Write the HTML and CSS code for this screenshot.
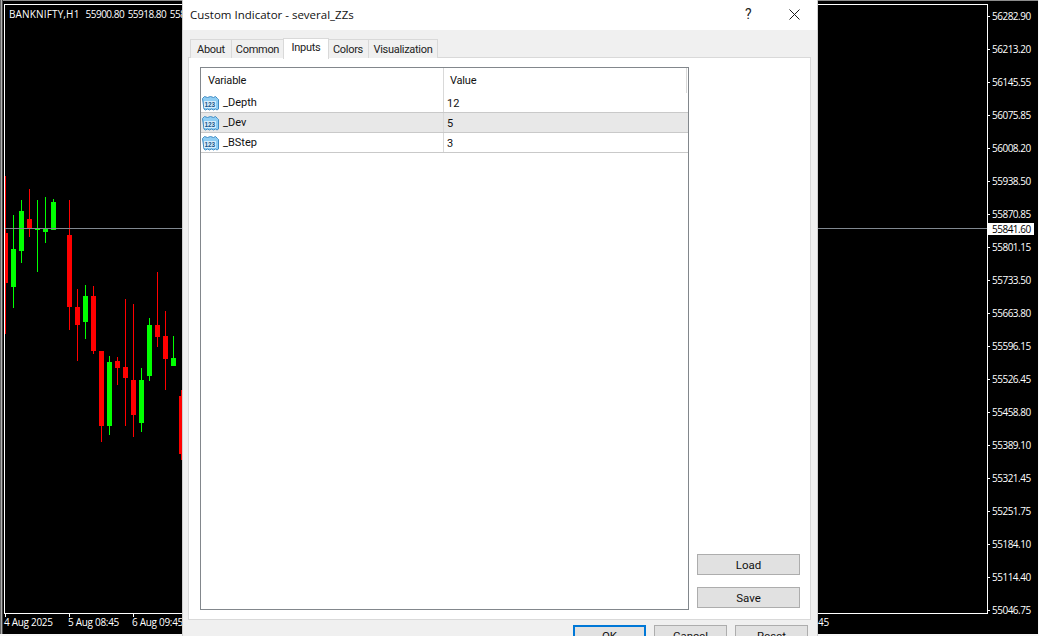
FILE: index.html
```html
<!DOCTYPE html>
<html lang="en">
<head>
<meta charset="utf-8">
<title>Custom Indicator - several_ZZs</title>
<link rel="stylesheet" href="styles.css">
</head>
<body>
<div class="terminal">
  <div class="chart-frame">
    <svg class="candles" width="178" height="600" viewBox="0 0 178 600" aria-hidden="true">
      <g transform="translate(-5,-5)">
        <g fill="#ff0000">
          <rect x="5" y="176" width="1" height="158"/><rect x="5" y="233" width="3" height="50"/>
          <rect x="29" y="189" width="1" height="48"/><rect x="27" y="219" width="5" height="9"/>
          <rect x="69" y="200" width="1" height="130"/><rect x="67" y="235" width="5" height="72"/>
          <rect x="77" y="289" width="1" height="72"/><rect x="75" y="307" width="5" height="18"/>
          <rect x="93" y="286" width="1" height="68"/><rect x="91" y="296" width="5" height="55"/>
          <rect x="101" y="351" width="1" height="91"/><rect x="99" y="351" width="5" height="75"/>
          <rect x="117" y="357" width="1" height="28"/><rect x="115" y="361" width="5" height="7"/>
          <rect x="125" y="299" width="1" height="127"/><rect x="123" y="367" width="5" height="11"/>
          <rect x="133" y="304" width="1" height="133"/><rect x="131" y="380" width="5" height="35"/>
          <rect x="157" y="272" width="1" height="75"/><rect x="155" y="325" width="5" height="12"/>
          <rect x="165" y="311" width="1" height="79"/><rect x="163" y="336" width="5" height="23"/>
          <rect x="181" y="390" width="1" height="70"/><rect x="179" y="396" width="5" height="58"/>
        </g>
        <g fill="#00ff00">
          <rect x="13" y="215" width="1" height="93"/><rect x="11" y="249" width="5" height="38"/>
          <rect x="21" y="200" width="1" height="63"/><rect x="19" y="211" width="5" height="40"/>
          <rect x="37" y="200" width="1" height="72"/><rect x="35" y="228" width="5" height="2"/>
          <rect x="45" y="197" width="1" height="46"/><rect x="43" y="229" width="5" height="3"/>
          <rect x="53" y="199" width="1" height="31"/><rect x="51" y="202" width="5" height="28"/>
          <rect x="85" y="285" width="1" height="54"/><rect x="83" y="296" width="5" height="26"/>
          <rect x="109" y="356" width="1" height="79"/><rect x="107" y="362" width="5" height="64"/>
          <rect x="141" y="368" width="1" height="64"/><rect x="139" y="380" width="5" height="43"/>
          <rect x="149" y="318" width="1" height="63"/><rect x="147" y="325" width="5" height="51"/>
          <rect x="173" y="336" width="1" height="22"/><rect x="171" y="358" width="5" height="8"/>
        </g>
      </g>
    </svg>
    <div class="bid-line"></div>
    <div class="symbol-info"><span class="sym">BANKNIFTY,H1</span><span class="quote">55900.80</span><span class="quote">55918.80</span><span class="quote">558</span></div>
  </div>
  <div class="price-axis">
    <div class="price">56282.90</div><div class="price">56213.20</div><div class="price">56145.55</div>
    <div class="price">56075.85</div><div class="price">56008.20</div><div class="price">55938.50</div>
    <div class="price">55870.85</div><div class="price">55801.15</div><div class="price">55733.50</div>
    <div class="price">55663.80</div><div class="price">55596.15</div><div class="price">55526.45</div>
    <div class="price">55458.80</div><div class="price">55389.10</div><div class="price">55321.45</div>
    <div class="price">55251.75</div><div class="price">55184.10</div><div class="price">55114.40</div>
    <div class="price">55046.75</div>
    <div class="bid-tag">55841.60</div>
  </div>
  <div class="time-axis">
    <span class="time">4 Aug 2025</span><span class="time">5 Aug 08:45</span><span class="time">6 Aug 09:45</span>
    <span class="time time-end">45</span>
  </div>
</div>

<section class="dialog">
  <header class="titlebar">
    <span class="title">Custom Indicator - several_ZZs</span>
    <span class="help">?</span>
    <svg class="close" width="11" height="11" viewBox="0 0 11 11" aria-hidden="true"><path d="M.5.5l10 10M10.500.5l-10 10" stroke="#1a1a1a" fill="none"/></svg>
  </header>
  <div class="tabs">
    <span class="tab tab-about">About</span>
    <span class="tab tab-common">Common</span>
    <span class="tab tab-active">Inputs</span>
    <span class="tab tab-colors">Colors</span>
    <span class="tab tab-vis">Visualization</span>
  </div>
  <div class="pane">
    <div class="list">
      <div class="list-head">
        <div class="head-var">Variable</div>
        <div class="head-val">Value</div>
      </div>
      <div class="row">
        <div class="cell-var"><svg class="ico" width="17" height="16" viewBox="0 0 17 16" aria-hidden="true"><path d="M.5 3.500l2-2 3 1 3-1 3 1 2-1 2 2 1 1v9.500l-1.500 1-1.500-1-2 1-2-1-2 1-2-1-2 1-1.500-1z" class="ico-sheet"/><rect x="2" y="6" width="12" height="7" class="ico-band"/><text x="2.400" y="12" class="ico-text">123</text></svg><span>_Depth</span></div>
        <div class="cell-val">12</div>
      </div>
      <div class="row row-selected">
        <div class="cell-var"><svg class="ico" width="17" height="16" viewBox="0 0 17 16" aria-hidden="true"><path d="M.5 3.500l2-2 3 1 3-1 3 1 2-1 2 2 1 1v9.500l-1.500 1-1.500-1-2 1-2-1-2 1-2-1-2 1-1.500-1z" class="ico-sheet"/><rect x="2" y="6" width="12" height="7" class="ico-band"/><text x="2.400" y="12" class="ico-text">123</text></svg><span>_Dev</span></div>
        <div class="cell-val">5</div>
      </div>
      <div class="row">
        <div class="cell-var"><svg class="ico" width="17" height="16" viewBox="0 0 17 16" aria-hidden="true"><path d="M.5 3.500l2-2 3 1 3-1 3 1 2-1 2 2 1 1v9.500l-1.500 1-1.500-1-2 1-2-1-2 1-2-1-2 1-1.500-1z" class="ico-sheet"/><rect x="2" y="6" width="12" height="7" class="ico-band"/><text x="2.400" y="12" class="ico-text">123</text></svg><span>_BStep</span></div>
        <div class="cell-val">3</div>
      </div>
    </div>
    <div class="side">
      <button class="btn side-btn">Load</button>
      <button class="btn side-btn">Save</button>
    </div>
  </div>
  <footer class="actions">
    <button class="btn act act-default">OK</button>
    <button class="btn act">Cancel</button>
    <button class="btn act">Reset</button>
  </footer>
</section>
</body>
</html>
```
FILE: styles.css
```css
* { box-sizing: border-box; }
html, body { margin: 0; height: 100%; overflow: hidden; }
body {
  width: 1039px;
  height: 636px;
  position: relative;
  background: #f8f8f8;
  font-family: Roboto, "Liberation Sans", Arial, sans-serif;
  font-size: 12px;
  color: #111;
}
.terminal {
  width: 1038px;
  height: 634px;
  background: #000;
  position: relative;
  display: grid;
  grid-template-columns: 984px 1fr;
  grid-template-rows: 610px 1fr;
  padding: 4px 0 0 4px;
  box-shadow: inset 1px 0 0 #666, inset 2px 0 0 #b0b0b0, inset 3px 0 0 #444, inset 0 1px 0 #8c8c8c;
  font-family: "Open Sans", "Liberation Sans", sans-serif;
  font-size: 10px;
  color: #fff;
}
.chart-frame {
  position: relative;
  border: 1px solid #fff;
  overflow: hidden;
}
.candles { display: block; }
.bid-line {
  position: absolute;
  left: 0;
  right: 0;
  top: 223px;
  height: 1px;
  background: #808890;
}
.symbol-info {
  position: absolute;
  top: 2px;
  left: 4px;
  display: flex;
  line-height: 14px;
  white-space: nowrap;
}
.sym { letter-spacing: 0.15px; margin-right: 6px; }
.quote { letter-spacing: -0.5px; margin-right: 3.500px; }
.price-axis {
  position: relative;
  padding-top: 5px;
}
.price {
  height: 33px;
  line-height: 14px;
  padding-left: 4px;
  letter-spacing: -0.5px;
  position: relative;
}
.price::before {
  content: "";
  position: absolute;
  left: 0;
  top: 7px;
  width: 2px;
  height: 1px;
  background: #fff;
}
.bid-tag {
  position: absolute;
  left: 0;
  top: 219px;
  width: 46px;
  height: 12px;
  line-height: 12px;
  padding-left: 4px;
  letter-spacing: -0.5px;
  background: #fff;
  color: #000;
}
.time-axis {
  grid-column: 1 / 3;
  display: flex;
  line-height: 14px;
  padding-top: 1px;
}
.time {
  width: 64px;
  white-space: nowrap;
  letter-spacing: -0.3px;
  position: relative;
}
.time::before {
  content: "";
  position: absolute;
  left: 1px;
  top: -1px;
  width: 1px;
  height: 3px;
  background: #fff;
}
.time-end { margin-left: 622px; }
.time-end::before { display: none; }
.dialog {
  position: absolute;
  left: 182px;
  top: 0;
  width: 636px;
  height: 636px;
  background: #f0f0f0;
  border-left: 1px solid #d0d0d0;
  border-right: 1px solid #d0d0d0;
  overflow: hidden;
}
.titlebar {
  height: 30px;
  background: #fff;
  display: flex;
  align-items: center;
  padding: 0 17px 2px 7px;
}
.title {
  font-family: "Open Sans", "Liberation Sans", sans-serif;
  font-size: 11.500px;
  flex: 1;
  color: #111;
}
.help { font-size: 14px; width: 44px; color: #222; }
.close { display: block; }
.tabs {
  display: flex;
  align-items: flex-end;
  height: 28px;
  padding-left: 7px;
  font-size: 11px;
  letter-spacing: -0.3px;
  position: relative;
  z-index: 1;
}
.tab {
  height: 19px;
  line-height: 19px;
  text-align: center;
  background: #f0f0f0;
  border: 1px solid #d9d9d9;
  border-bottom: 0;
  border-left: 0;
  color: #222;
}
.tab-about { width: 42px; border-left: 1px solid #d9d9d9; }
.tab-common { width: 52px; }
.tab-active {
  width: 46px;
  height: 21px;
  line-height: 18px;
  background: #fff;
  border: 1px solid #d9d9d9;
  border-bottom: 0;
  margin-bottom: -1px;
  margin-left: -1px;
  position: relative;
}
.tab-colors { width: 41px; margin-left: -1px; }
.tab-vis { width: 69px; }
.pane {
  margin: -1px 6px 0 5px;
  height: 563px;
  background: #fff;
  border: 1px solid #d9d9d9;
  display: flex;
  padding: 9px 10px 8px 11px;
}
.list {
  width: 489px;
  height: 543px;
  border: 1px solid #82878c;
  background: #fff;
  font-size: 11px;
  flex: none;
}
.list-head { display: flex; height: 25px; line-height: 26px; }
.head-var { width: 243px; padding-left: 7px; border-right: 1px solid #d9d9d9; letter-spacing: -0.2px; }
.head-val { flex: 1; padding-left: 6px; border-right: 1px solid #d9d9d9; margin-right: 1px; letter-spacing: -0.2px; }
.row {
  display: flex;
  height: 20px;
  line-height: 21px;
  border-bottom: 1px solid #c9c9c9;
}
.row-selected { background: #e8e8e8; }
.cell-var {
  width: 243px;
  display: flex;
  align-items: center;
  border-right: 1px solid #d9d9d9;
  padding-left: 1px;
}
.cell-var span { margin-left: 4px; }
.cell-val { flex: 1; padding-left: 3px; }
.ico { display: block; flex: none; }
.ico-sheet { fill: #8fcdf3; stroke: #3f8cc4; }
.ico-band { fill: #d8edfb; }
.ico-text {
  font-family: "Liberation Sans", sans-serif;
  font-size: 6.500px;
  font-weight: 700;
  fill: #17568c;
}
.side {
  flex: 1;
  display: flex;
  flex-direction: column;
  align-items: flex-end;
  justify-content: flex-end;
  gap: 12px;
  padding-bottom: 3px;
}
.btn {
  background: #e1e1e1;
  border: 1px solid #adadad;
  font-family: Roboto, "Liberation Sans", sans-serif;
  font-size: 11.500px;
  color: #111;
  padding: 0;
  border-radius: 0;
}
.side-btn { width: 103px; height: 21px; }
.actions {
  display: flex;
  justify-content: flex-end;
  gap: 8px;
  padding: 5px 9px 0 0;
}
.act { width: 73px; height: 24px; flex: none; padding-bottom: 3px; }
.act-default { border: 2px solid #0078d7; }
```
